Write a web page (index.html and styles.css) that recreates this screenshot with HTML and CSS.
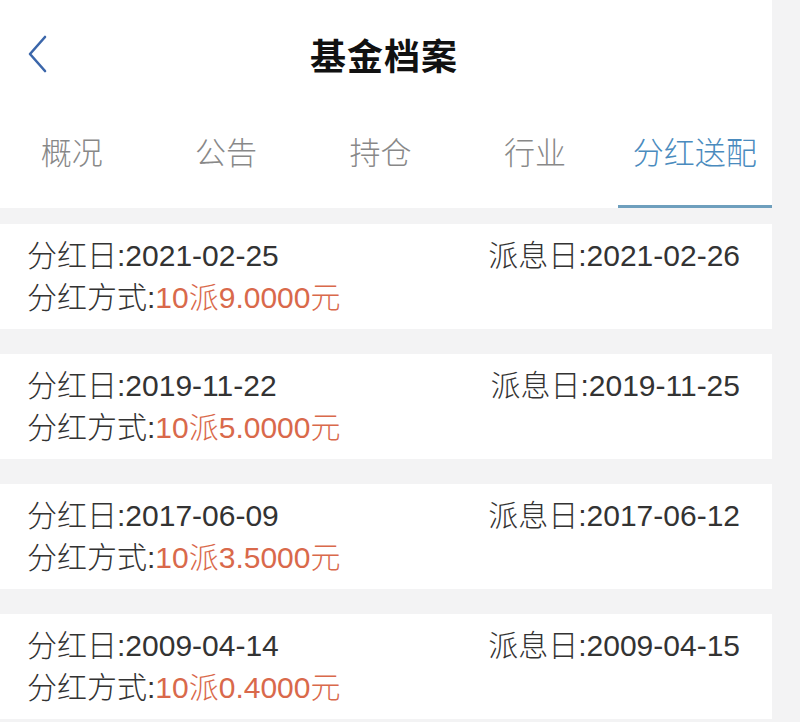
FILE: index.html
```html
<!DOCTYPE html>
<html lang="zh-CN">
<head>
<meta charset="utf-8">
<title>基金档案</title>
<link rel="stylesheet" href="styles.css">
</head>
<body>
<div class="page">
  <header class="nav">
    <span class="back">
      <svg width="24" height="40" viewBox="0 0 24 40"><polyline points="19,3 4,20 19,37" fill="none" stroke="#3b66aa" stroke-width="2.6" stroke-linecap="round" stroke-linejoin="round"/></svg>
    </span>
    <h1 class="title">基金档案</h1>
  </header>
  <nav class="tabs">
    <div class="tab">概况</div>
    <div class="tab">公告</div>
    <div class="tab">持仓</div>
    <div class="tab">行业</div>
    <div class="tab active">分红送配</div>
  </nav>
  <main class="list">
    <section class="card">
      <div class="row"><span>分红日:2021-02-25</span><span>派息日:2021-02-26</span></div>
      <div class="row"><span>分红方式:<em class="val">10派9.0000元</em></span></div>
    </section>
    <section class="card">
      <div class="row"><span>分红日:2019-11-22</span><span>派息日:2019-11-25</span></div>
      <div class="row"><span>分红方式:<em class="val">10派5.0000元</em></span></div>
    </section>
    <section class="card">
      <div class="row"><span>分红日:2017-06-09</span><span>派息日:2017-06-12</span></div>
      <div class="row"><span>分红方式:<em class="val">10派3.5000元</em></span></div>
    </section>
    <section class="card">
      <div class="row"><span>分红日:2009-04-14</span><span>派息日:2009-04-15</span></div>
      <div class="row"><span>分红方式:<em class="val">10派0.4000元</em></span></div>
    </section>
  </main>
</div>
</body>
</html>
```

FILE: styles.css
```css
html, body {
  margin: 0;
  padding: 0;
  background: #f3f3f4;
  font-family: "Liberation Sans", "Noto Sans CJK SC", sans-serif;
}
.page {
  width: 772px;
  height: 722px;
  overflow: hidden;
}
.nav {
  height: 108px;
  background: #fff;
  display: flex;
  align-items: center;
  justify-content: center;
  position: relative;
}
.back {
  position: absolute;
  left: 26px;
  top: 34px;
  display: flex;
}
.title {
  margin: 0 4px 0 0;
  font-size: 36px;
  font-weight: bold;
  color: #111;
  font-family: "Noto Sans CJK SC", sans-serif;
  letter-spacing: 1px;
}
.tabs {
  height: 100px;
  background: #fff;
  display: grid;
  grid-template-columns: repeat(5, 1fr);
}
.tab {
  display: flex;
  align-items: center;
  justify-content: center;
  padding-bottom: 12px;
  padding-right: 11px;
  font-size: 31px;
  font-weight: 300;
  color: #888;
  font-family: "Noto Sans CJK SC", sans-serif;
  box-sizing: border-box;
  border-bottom: 3px solid transparent;
}
.tab.active {
  padding-right: 0;
  color: #4a8bbe;
  border-bottom-color: #6e9fbd;
}
.list {
  padding-top: 16px;
  display: flex;
  flex-direction: column;
  gap: 25px;
}
.card {
  background: #fff;
  height: 105px;
  box-sizing: border-box;
  padding: 11px 32px 0 27px;
  display: flex;
  flex-direction: column;
}
.row {
  display: flex;
  justify-content: space-between;
  font-size: 30px;
  font-weight: 300;
  line-height: 42px;
  color: #333;
}
.val {
  font-style: normal;
  color: #d9694b;
}
```
